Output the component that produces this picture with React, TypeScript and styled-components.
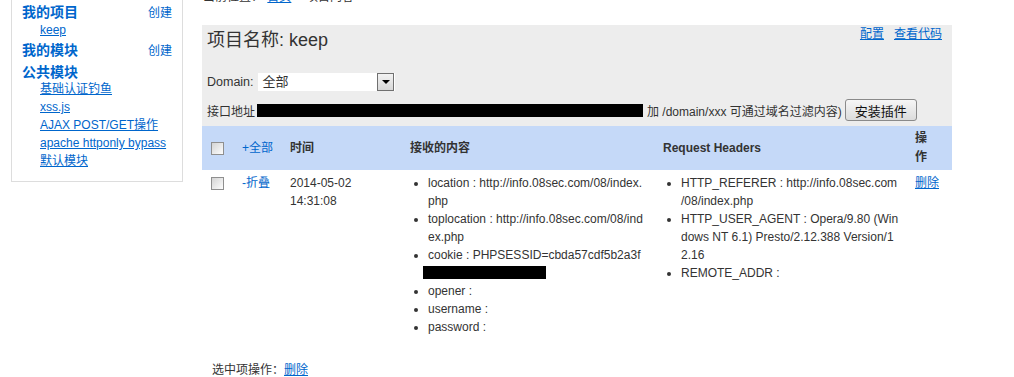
import React from 'react';
import styled, { createGlobalStyle } from 'styled-components';

const GlobalStyle = createGlobalStyle`
  body {
    margin: 0;
    background: #ffffff;
    color: #333333;
    font-family: 'Liberation Sans', Arial, 'Noto Sans CJK SC', sans-serif;
    font-size: 12px;
  }
  a {
    color: #0066cc;
  }
`;

const Page = styled.div`
  display: flex;
  align-items: flex-start;
`;

const SideBar = styled.aside`
  box-sizing: border-box;
  width: 172px;
  margin-left: 11px;
  padding: 0 10px 11px;
  border: 1px solid #dddddd;
  border-top: none;
`;

const SideHead = styled.div`
  display: flex;
  justify-content: space-between;
  align-items: center;
  height: 22px;
  h3 {
    margin: 0;
    font-size: 14px;
    font-weight: bold;
    color: #0066cc;
  }
  a {
    text-decoration: none;
    font-size: 12px;
  }
`;

const SideLinks = styled.ul<{ $tight?: boolean }>`
  list-style: none;
  margin: ${(p) => (p.$tight ? '-2px 0 0' : '0')};
  padding: 0 0 0 18px;
  li {
    line-height: ${(p) => (p.$tight ? '18px' : '16px')};
  }
`;

const Main = styled.main`
  width: 750px;
  margin-left: 19px;
  margin-top: -11px;
`;

const Crumb = styled.div`
  line-height: 16px;
  padding-left: 1px;
  margin-bottom: 20px;
  a {
    margin: 0 1px;
  }
`;

const Panel = styled.section`
  background: #ededed;
  padding: 0 10px 5px 5px;
`;

const TitleRow = styled.div`
  display: flex;
  justify-content: space-between;
  align-items: flex-start;
  h2 {
    margin: 0;
    font-size: 18px;
    font-weight: normal;
    line-height: 30px;
    color: #333333;
  }
`;

const TopLinks = styled.div`
  display: flex;
  gap: 10px;
  line-height: 18px;
`;

const FieldRow = styled.div<{ $gap: number }>`
  display: flex;
  align-items: center;
  margin-top: ${(p) => p.$gap}px;
`;

const Label = styled.span`
  font-size: 12.5px;
`;

const FakeSelect = styled.div`
  position: relative;
  box-sizing: border-box;
  width: 137px;
  height: 18px;
  margin-left: 4px;
  padding-left: 5px;
  background: #ffffff;
  font-size: 13px;
  line-height: 18px;
`;

const SelectArrow = styled.span`
  position: absolute;
  right: 1px;
  top: 0;
  box-sizing: border-box;
  width: 17px;
  height: 18px;
  border: 1px solid #707070;
  background: linear-gradient(#f2f2f2, #d8d8d8);
  &::after {
    content: '';
    position: absolute;
    left: 4px;
    top: 6px;
    border-left: 4px solid transparent;
    border-right: 4px solid transparent;
    border-top: 4px solid #000000;
  }
`;

const Redacted = styled.span<{ $w: number }>`
  display: inline-block;
  width: ${(p) => p.$w}px;
  height: 13px;
  background: #000000;
`;

const Hint = styled.span`
  margin-left: 4px;
`;

const PlugBtn = styled.button`
  box-sizing: border-box;
  width: 72px;
  height: 22px;
  margin-left: 3px;
  padding: 0;
  border: 1px solid #8a8a8a;
  border-radius: 3px;
  background: linear-gradient(#f6f6f6, #dcdcdc);
  color: #111111;
  font-family: inherit;
  font-size: 13px;
`;

const Table = styled.table`
  width: 750px;
  table-layout: fixed;
  border-collapse: collapse;
`;

const HeadCell = styled.th<{ $narrow?: boolean }>`
  height: 44px;
  padding: ${(p) => (p.$narrow ? '0 14px 0 7px' : '0 8px')};
  background: #c5d9f8;
  text-align: left;
  vertical-align: middle;
  font-weight: bold;
  line-height: 19px;
  color: #333333;
`;

const Cell = styled.td<{ $pl?: number; $wrap?: boolean }>`
  padding: 4px 8px 4px ${(p) => p.$pl ?? 8}px;
  vertical-align: top;
  line-height: 18px;
  word-break: ${(p) => (p.$wrap ? 'break-all' : 'normal')};
`;

const Check = styled.span<{ $top?: number }>`
  display: block;
  box-sizing: border-box;
  width: 13px;
  height: 13px;
  margin: ${(p) => p.$top ?? 0}px 0 0 1px;
  border: 1px solid #8f8f8f;
  background: linear-gradient(135deg, #d4d4d4, #fdfdfd);
`;

const Toggle = styled.a`
  text-decoration: none;
  font-weight: normal;
`;

const DataList = styled.ul`
  margin: 0;
  padding-left: 18px;
`;

const CookieMask = styled(Redacted)`
  display: block;
  margin: 2px 0 3px -5px;
`;

const DelLink = styled.a`
  white-space: nowrap;
`;

const Footer = styled.div`
  margin-top: 22px;
  padding-left: 10px;
  line-height: 16px;
`;

const projectLinks = ['基础认证钓鱼', 'xss.js', 'AJAX POST/GET操作', 'apache httponly bypass', '默认模块'];

const colWidths = [32, 48, 120, 253, 253, 44];

export default function App() {
  return (
    <>
      <GlobalStyle />
      <Page>
        <SideBar>
          <SideHead>
            <h3>我的项目</h3>
            <a href="#">创建</a>
          </SideHead>
          <SideLinks>
            <li>
              <a href="#">keep</a>
            </li>
          </SideLinks>
          <SideHead>
            <h3>我的模块</h3>
            <a href="#">创建</a>
          </SideHead>
          <SideHead>
            <h3>公共模块</h3>
          </SideHead>
          <SideLinks $tight>
            {projectLinks.map((name) => (
              <li key={name}>
                <a href="#">{name}</a>
              </li>
            ))}
          </SideLinks>
        </SideBar>

        <Main>
          <Crumb>
            当前位置： <a href="#">首页</a> &gt; 项目内容
          </Crumb>
          <Panel>
            <TitleRow>
              <h2>项目名称: keep</h2>
              <TopLinks>
                <a href="#">配置</a>
                <a href="#">查看代码</a>
              </TopLinks>
            </TitleRow>
            <FieldRow $gap={18}>
              <Label>Domain:</Label>
              <FakeSelect>
                全部
                <SelectArrow />
              </FakeSelect>
            </FieldRow>
            <FieldRow $gap={8}>
              接口地址
              <Redacted $w={386} style={{ marginLeft: 2 }} />
              <Hint>加 /domain/xxx 可通过域名过滤内容)</Hint>
              <PlugBtn>安装插件</PlugBtn>
            </FieldRow>
          </Panel>

          <Table>
            <colgroup>
              {colWidths.map((w, i) => (
                <col key={i} style={{ width: w }} />
              ))}
            </colgroup>
            <thead>
              <tr>
                <HeadCell>
                  <Check />
                </HeadCell>
                <HeadCell>
                  <Toggle href="#">+全部</Toggle>
                </HeadCell>
                <HeadCell>时间</HeadCell>
                <HeadCell>接收的内容</HeadCell>
                <HeadCell>Request Headers</HeadCell>
                <HeadCell $narrow>操作</HeadCell>
              </tr>
            </thead>
            <tbody>
              <tr>
                <Cell>
                  <Check $top={3} />
                </Cell>
                <Cell>
                  <Toggle href="#">-折叠</Toggle>
                </Cell>
                <Cell>2014-05-02 14:31:08</Cell>
                <Cell $wrap>
                  <DataList>
                    <li>location : http://info.08sec.com/08/index.php</li>
                    <li>toplocation : http://info.08sec.com/08/index.php</li>
                    <li>
                      cookie : PHPSESSID=cbda57cdf5b2a3f
                      <CookieMask $w={123} />
                    </li>
                    <li>opener :</li>
                    <li>username :</li>
                    <li>password :</li>
                  </DataList>
                </Cell>
                <Cell $wrap>
                  <DataList>
                    <li>
                      HTTP_REFERER : http://info.08sec.com<wbr />/08/index.php
                    </li>
                    <li>HTTP_USER_AGENT : Opera/9.80 (Windows NT 6.1) Presto/2.12.388 Version/12.16</li>
                    <li>REMOTE_ADDR :</li>
                  </DataList>
                </Cell>
                <Cell $pl={7}>
                  <DelLink href="#">删除</DelLink>
                </Cell>
              </tr>
            </tbody>
          </Table>

          <Footer>
            选中项操作：<a href="#">删除</a>
          </Footer>
        </Main>
      </Page>
    </>
  );
}
